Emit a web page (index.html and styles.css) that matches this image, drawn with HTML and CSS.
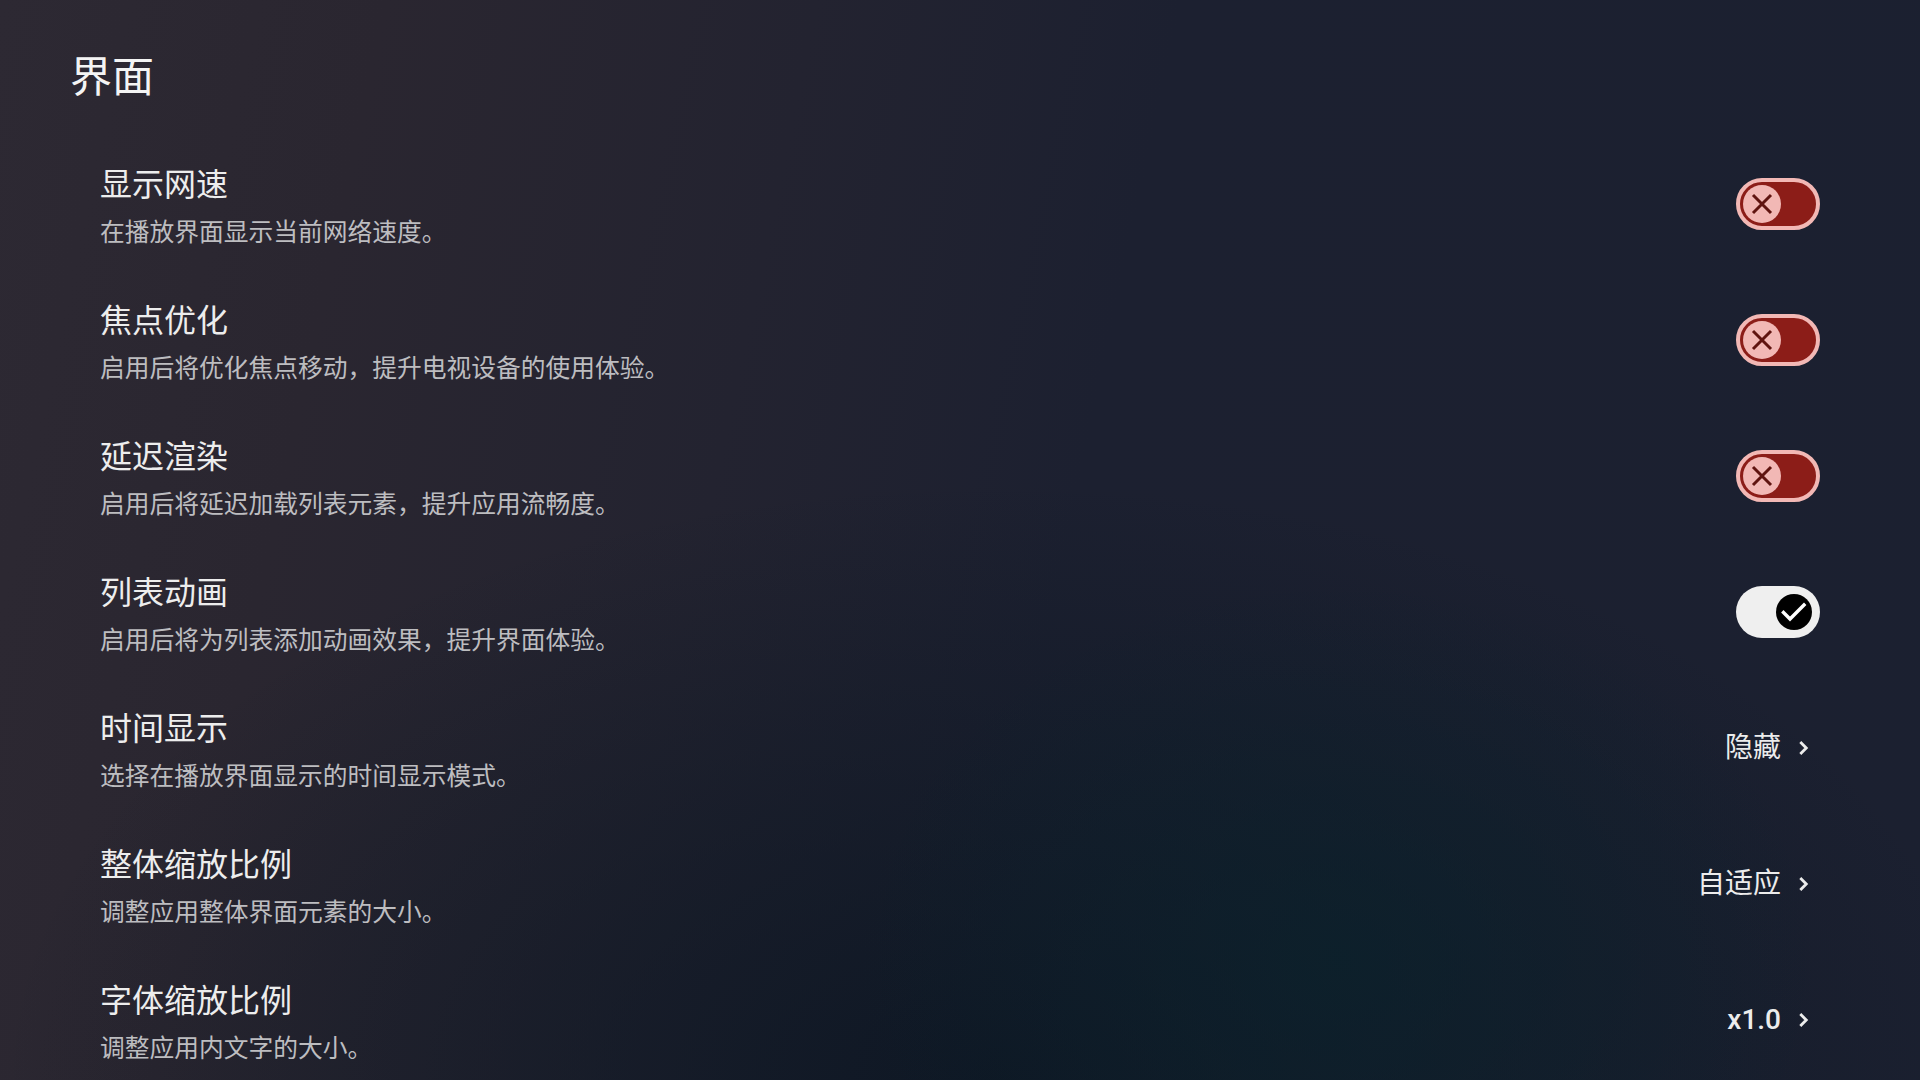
FILE: index.html
```html
<!DOCTYPE html>
<html lang="zh-CN">
<head>
<meta charset="utf-8">
<title>界面</title>
<link rel="stylesheet" href="styles.css">
</head>
<body>
<main class="page">
  <h1 class="page-title">界面</h1>
  <ul class="settings">
    <li class="item">
      <div class="text">
        <div class="label">显示网速</div>
        <div class="desc">在播放界面显示当前网络速度。</div>
      </div>
      <span class="switch off">
        <span class="thumb">
          <svg viewBox="0 0 38 38"><path d="M10 10l18 18M28 10L10 28"/></svg>
        </span>
      </span>
    </li>
    <li class="item">
      <div class="text">
        <div class="label">焦点优化</div>
        <div class="desc">启用后将优化焦点移动，提升电视设备的使用体验。</div>
      </div>
      <span class="switch off">
        <span class="thumb">
          <svg viewBox="0 0 38 38"><path d="M10 10l18 18M28 10L10 28"/></svg>
        </span>
      </span>
    </li>
    <li class="item">
      <div class="text">
        <div class="label">延迟渲染</div>
        <div class="desc">启用后将延迟加载列表元素，提升应用流畅度。</div>
      </div>
      <span class="switch off">
        <span class="thumb">
          <svg viewBox="0 0 38 38"><path d="M10 10l18 18M28 10L10 28"/></svg>
        </span>
      </span>
    </li>
    <li class="item">
      <div class="text">
        <div class="label">列表动画</div>
        <div class="desc">启用后将为列表添加动画效果，提升界面体验。</div>
      </div>
      <span class="switch on">
        <span class="thumb">
          <svg viewBox="0 0 36 36"><path d="M7.5 18.5l6.5 6.5 14-14"/></svg>
        </span>
      </span>
    </li>
    <li class="item">
      <div class="text">
        <div class="label">时间显示</div>
        <div class="desc">选择在播放界面显示的时间显示模式。</div>
      </div>
      <span class="value">隐藏<svg class="chev" viewBox="0 0 24 24"><path d="M9.5 6.5l5.5 5.5-5.5 5.5"/></svg></span>
    </li>
    <li class="item">
      <div class="text">
        <div class="label">整体缩放比例</div>
        <div class="desc">调整应用整体界面元素的大小。</div>
      </div>
      <span class="value">自适应<svg class="chev" viewBox="0 0 24 24"><path d="M9.5 6.5l5.5 5.5-5.5 5.5"/></svg></span>
    </li>
    <li class="item">
      <div class="text">
        <div class="label">字体缩放比例</div>
        <div class="desc">调整应用内文字的大小。</div>
      </div>
      <span class="value num">x1.0<svg class="chev" viewBox="0 0 24 24"><path d="M9.5 6.5l5.5 5.5-5.5 5.5"/></svg></span>
    </li>
  </ul>
</main>
</body>
</html>
```

FILE: styles.css
```css
html, body {
  margin: 0;
  padding: 0;
  height: 100%;
  overflow: hidden;
}

body {
  font-family: Roboto, "Noto Sans CJK SC", "Noto Sans", sans-serif;
  color: #ececec;
  background-color: #1b2030;
  background-image:
    radial-gradient(ellipse 480px 380px at 1340px 960px, rgba(10, 34, 44, 0.7), rgba(10, 34, 44, 0) 100%),
    radial-gradient(ellipse 1000px 600px at 1000px 1080px, rgba(12, 22, 34, 0.85), rgba(12, 22, 34, 0) 100%),
    linear-gradient(102deg, #2d2933 0%, #2a2630 18%, #232330 38%, #1c2030 55%, #1b2030 100%);
}

.page {
  padding: 50px 100px 0 70px;
}

.page-title {
  margin: 0 0 30px;
  font-size: 42px;
  line-height: 56px;
  font-weight: 400;
  color: #f4f4f4;
}

.settings {
  list-style: none;
  margin: 0;
  padding: 0;
}

.item {
  height: 136px;
  display: flex;
  align-items: center;
  justify-content: space-between;
  padding: 0 0 0 30px;
}

.text {
  display: flex;
  flex-direction: column;
  gap: 10px;
  margin-top: 4px;
}

.label {
  font-size: 32px;
  line-height: 44px;
  color: #ededed;
}

.desc {
  font-size: 24.75px;
  line-height: 32px;
  color: #bdbdc0;
}

/* Material-style switch, scaled up for the TV layout */
.switch {
  position: relative;
  box-sizing: border-box;
  width: 84px;
  height: 52px;
  border-radius: 26px;
  flex: none;
}

.switch.off {
  background: #8c1d18;
  border: 4px solid #f2b8b5;
}

.switch.on {
  background: #efefef;
}

.thumb {
  position: absolute;
  top: 50%;
  border-radius: 50%;
  display: flex;
  align-items: center;
  justify-content: center;
}

.switch.off .thumb {
  left: 3px;
  width: 38px;
  height: 38px;
  margin-top: -19px;
  background: #f2b8b5;
}

.switch.on .thumb {
  right: 8px;
  width: 36px;
  height: 36px;
  margin-top: -18px;
  background: #000;
}

.thumb svg {
  width: 100%;
  height: 100%;
  fill: none;
  stroke-linecap: square;
}

.switch.off .thumb svg {
  stroke: #601410;
  stroke-width: 3;
  stroke-linecap: butt;
}

.switch.on .thumb svg {
  stroke: #fff;
  stroke-width: 3.4;
}

.value {
  display: flex;
  align-items: center;
  gap: 9px;
  font-size: 28px;
  line-height: 40px;
  color: #ececec;
  margin-right: 4px;
}

.value.num {
  font-weight: 500;
}

.chev {
  width: 26px;
  height: 26px;
  fill: none;
  stroke: #ececec;
  stroke-width: 2.6;
}
```
